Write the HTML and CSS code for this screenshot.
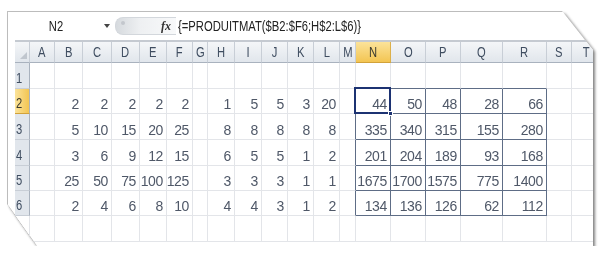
FILE: index.html
```html
<!DOCTYPE html>
<html>
<head>
<meta charset="utf-8">
<link rel="stylesheet" href="styles.css">
</head>
<body>
<div class="stage">
  <div class="panel">
    <div class="fbar">
      <div class="namebox"><span class="nar">N2</span></div>
      <span class="dd"></span>
      <div class="fxbox"><span class="dot"></span><span class="fx">fx</span></div>
      <div class="formula"><span class="nar">{=PRODUITMAT($B2:$F6;H$2:L$6)}</span></div>
    </div>
    <div class="sheet">
      <div class="ch corner"><span class="tri"></span></div><div class="ch"><span class="nar">A</span></div><div class="ch"><span class="nar">B</span></div><div class="ch"><span class="nar">C</span></div><div class="ch"><span class="nar">D</span></div><div class="ch"><span class="nar">E</span></div><div class="ch"><span class="nar">F</span></div><div class="ch"><span class="nar">G</span></div><div class="ch"><span class="nar">H</span></div><div class="ch"><span class="nar">I</span></div><div class="ch"><span class="nar">J</span></div><div class="ch"><span class="nar">K</span></div><div class="ch"><span class="nar">L</span></div><div class="ch"><span class="nar">M</span></div><div class="ch sel"><span class="nar">N</span></div><div class="ch"><span class="nar">O</span></div><div class="ch"><span class="nar">P</span></div><div class="ch"><span class="nar">Q</span></div><div class="ch"><span class="nar">R</span></div><div class="ch"><span class="nar">S</span></div><div class="ch"><span class="nar">T</span></div>

      <div class="rh"><span class="nar">1</span></div><div class="c"></div><div class="c"></div><div class="c"></div><div class="c"></div><div class="c"></div><div class="c"></div><div class="c"></div><div class="c"></div><div class="c"></div><div class="c"></div><div class="c"></div><div class="c"></div><div class="c"></div><div class="c tt"></div><div class="c tt"></div><div class="c tt"></div><div class="c tt"></div><div class="c tt"></div><div class="c"></div><div class="c"></div>

      <div class="rh sel"><span class="nar">2</span></div><div class="c"></div><div class="c">2</div><div class="c">2</div><div class="c">2</div><div class="c">2</div><div class="c">2</div><div class="c"></div><div class="c">1</div><div class="c">5</div><div class="c">5</div><div class="c">3</div><div class="c">20</div><div class="c tl"></div><div class="c t cur">44</div><div class="c t">50</div><div class="c t">48</div><div class="c t">28</div><div class="c t">66</div><div class="c"></div><div class="c"></div>

      <div class="rh"><span class="nar">3</span></div><div class="c"></div><div class="c">5</div><div class="c">10</div><div class="c">15</div><div class="c">20</div><div class="c">25</div><div class="c"></div><div class="c">8</div><div class="c">8</div><div class="c">8</div><div class="c">8</div><div class="c">8</div><div class="c tl"></div><div class="c t">335</div><div class="c t">340</div><div class="c t">315</div><div class="c t">155</div><div class="c t">280</div><div class="c"></div><div class="c"></div>

      <div class="rh"><span class="nar">4</span></div><div class="c"></div><div class="c">3</div><div class="c">6</div><div class="c">9</div><div class="c">12</div><div class="c">15</div><div class="c"></div><div class="c">6</div><div class="c">5</div><div class="c">5</div><div class="c">1</div><div class="c">2</div><div class="c tl"></div><div class="c t">201</div><div class="c t">204</div><div class="c t">189</div><div class="c t">93</div><div class="c t">168</div><div class="c"></div><div class="c"></div>

      <div class="rh"><span class="nar">5</span></div><div class="c"></div><div class="c">25</div><div class="c">50</div><div class="c">75</div><div class="c">100</div><div class="c">125</div><div class="c"></div><div class="c">3</div><div class="c">3</div><div class="c">3</div><div class="c">1</div><div class="c">1</div><div class="c tl"></div><div class="c t">1675</div><div class="c t">1700</div><div class="c t">1575</div><div class="c t">775</div><div class="c t">1400</div><div class="c"></div><div class="c"></div>

      <div class="rh"><span class="nar">6</span></div><div class="c"></div><div class="c">2</div><div class="c">4</div><div class="c">6</div><div class="c">8</div><div class="c">10</div><div class="c"></div><div class="c">4</div><div class="c">4</div><div class="c">3</div><div class="c">1</div><div class="c">2</div><div class="c tl"></div><div class="c t">134</div><div class="c t">136</div><div class="c t">126</div><div class="c t">62</div><div class="c t">112</div><div class="c"></div><div class="c"></div>

      <div class="rh blank"></div><div class="c"></div><div class="c"></div><div class="c"></div><div class="c"></div><div class="c"></div><div class="c"></div><div class="c"></div><div class="c"></div><div class="c"></div><div class="c"></div><div class="c"></div><div class="c"></div><div class="c"></div><div class="c"></div><div class="c"></div><div class="c"></div><div class="c"></div><div class="c"></div><div class="c"></div><div class="c"></div>
    </div>
  </div>
</div>
</body>
</html>
```

FILE: styles.css
```css
html, body {
  margin: 0;
  background: #ffffff;
}

.stage {
  width: 585px;
  padding: 12px 0 0 8px;
  filter: drop-shadow(2px 2px 1.5px rgba(0, 0, 0, 0.45)) drop-shadow(-0.5px -0.5px 0.5px rgba(0, 0, 0, 0.25));
}

.panel {
  width: 585px;
  height: 234px;
  background: #ffffff;
  overflow: hidden;
  clip-path: polygon(0 0, 555px 0, 585px 38px, 585px 100%, 29px 100%, 0 193px);
  font-family: "Liberation Sans", Arial, sans-serif;
}

.nar {
  display: inline-block;
  transform: scaleX(0.8);
}

/* formula bar */
.fbar {
  height: 28px;
  display: flex;
  align-items: center;
  padding-left: 7px;
}

.namebox {
  width: 82px;
  text-align: center;
  font-size: 14px;
  color: #222;
}

.dd {
  width: 0;
  height: 0;
  margin-left: 7px;
  border-left: 3px solid transparent;
  border-right: 3px solid transparent;
  border-top: 4px solid #444;
}

.fxbox {
  margin-left: 5px;
  width: 60px;
  height: 16px;
  border-radius: 8px 0 0 8px;
  background: linear-gradient(90deg, #d6dade 0%, #eef0f2 40%, #f8f9fa 100%);
  border: 1px solid #d3d7dc;
  border-right: none;
  display: flex;
  align-items: center;
}

.dot {
  width: 4px;
  height: 4px;
  border-radius: 50%;
  background: #c3c7cd;
  margin-left: 5px;
  margin-top: -6px;
}

.fx {
  margin-left: auto;
  margin-right: 5px;
  font-family: "Liberation Serif", serif;
  font-style: italic;
  font-weight: bold;
  font-size: 12px;
  color: #333;
}

.formula {
  margin-left: 2px;
  font-size: 14.5px;
  color: #222;
  white-space: nowrap;
}

.formula .nar {
  transform: scaleX(0.775);
  transform-origin: 0 50%;
}

/* sheet grid */
.sheet {
  margin-left: 7px;
  border-top: 2px solid #c5cad1;
  display: grid;
  grid-template-columns: 15px 25px 28px 29px 28px 27px 26px 15px 27px 27px 26px 26px 26px 16px 35px 35px 35px 42px 44px 25px 30px;
  grid-template-rows: 21px 26px 25px 26px 26px 25px 25px 26px;
}

.ch {
  box-sizing: border-box;
  background: linear-gradient(#f4f6f8, #e1e6ec);
  border-right: 1px solid #c8ced6;
  border-bottom: 1px solid #a9b2be;
  display: flex;
  align-items: center;
  justify-content: center;
  font-size: 14px;
  color: #3f4d60;
}

.ch.sel {
  background: linear-gradient(#fbe39a, #f3c552);
  border-right-color: #dcb04a;
  border-bottom-color: #d2a23a;
  color: #3a3a30;
}

.corner {
  position: relative;
}

.tri {
  position: absolute;
  right: 2px;
  bottom: 3px;
  width: 0;
  height: 0;
  border-left: 7px solid transparent;
  border-bottom: 7px solid #c0c6ce;
}

.rh {
  box-sizing: border-box;
  background: #e1e6ec;
  border-right: 1px solid #a9b2be;
  border-bottom: 1px solid #c8ced6;
  display: flex;
  align-items: flex-end;
  padding: 0 0 2px 1px;
  font-size: 14px;
  line-height: 16px;
  color: #3f4d60;
}

.rh .nar {
  transform-origin: 0 50%;
}

.rh.sel {
  background: linear-gradient(90deg, #fbe39a, #f3c552);
  border-bottom-color: #d2a23a;
  color: #3a3a30;
}

.rh.blank {
  background: #ffffff;
  border-right-color: #e3e5e9;
  border-bottom-color: #e3e5e9;
}

.c {
  box-sizing: border-box;
  border-right: 1px solid #e3e5e9;
  border-bottom: 1px solid #e3e5e9;
  display: flex;
  justify-content: flex-end;
  align-items: flex-end;
  padding: 0 3px 1px 0;
  font-size: 14px;
  line-height: 16px;
  letter-spacing: -0.35px;
  color: #4f5868;
  white-space: nowrap;
}

.c.t {
  border-right-color: #5e6d86;
  border-bottom-color: #5e6d86;
}

.c.tl {
  border-right-color: #5e6d86;
}

.c.tt {
  border-bottom-color: #5e6d86;
}

.c.cur {
  position: relative;
}

.c.cur::after {
  content: "";
  position: absolute;
  left: -2px;
  top: -2px;
  right: -1px;
  bottom: -1px;
  border: 2px solid #1c3272;
}

.c.cur::before {
  content: "";
  position: absolute;
  right: -3px;
  bottom: -3px;
  width: 5px;
  height: 5px;
  background: #1c3272;
  border: 1px solid #ffffff;
  box-sizing: border-box;
  z-index: 1;
}
```
